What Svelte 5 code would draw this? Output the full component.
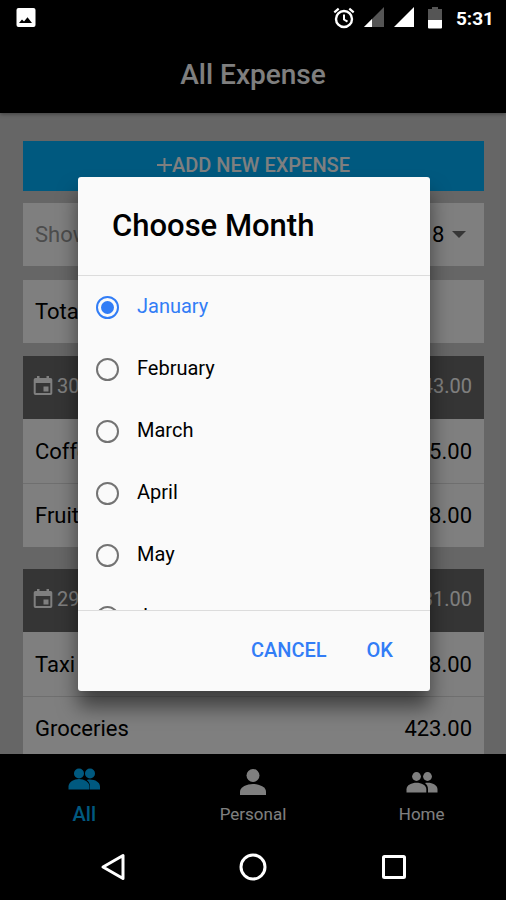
<script>
  const months = [
    "January", "February", "March", "April", "May", "June",
    "July", "August", "September", "October", "November", "December"
  ];

  const days = [
    {
      date: "30 Jan 2018",
      total: "43.00",
      items: [
        { name: "Coffee", amount: "25.00" },
        { name: "Fruits", amount: "18.00" }
      ]
    },
    {
      date: "29 Jan 2018",
      total: "431.00",
      items: [
        { name: "Taxi", amount: "8.00" },
        { name: "Groceries", amount: "423.00" }
      ]
    }
  ];

  const tabs = [
    { id: "all", label: "All" },
    { id: "personal", label: "Personal" },
    { id: "home", label: "Home" }
  ];

  let month = $state("January");
  let year = $state("2018");
  let activeTab = $state("all");
  let dialogOpen = $state(true);

  function closeDialog() {
    dialogOpen = false;
  }
</script>

<div class="device">
  <div class="status-bar">
    <svg class="status-icon" width="20" height="20" viewBox="0 0 20 20">
      <rect x="0.5" y="0" width="19" height="19" rx="2" fill="#fff" />
      <path d="M3 15l3-3.500 2 2 3.500-4.300 4.500 5.800z" fill="#000" />
    </svg>
    <div class="status-right">
      <svg width="22" height="22" viewBox="0 0 22 22" fill="none" stroke="#fff">
        <circle cx="11" cy="12" r="8" stroke-width="2.4" />
        <path d="M11 7.5v5l3.5 2.2" stroke-width="2" />
        <path d="M1.3 5.4l4.4-3.7M20.7 5.4l-4.4-3.7" stroke-width="2.2" />
      </svg>
      <svg width="22" height="22" viewBox="0 0 22 22">
        <path d="M21 0v20H1z" fill="#555" />
        <path d="M9 12v8H1z" fill="#fff" />
      </svg>
      <svg width="22" height="22" viewBox="0 0 22 22">
        <path d="M21 0v20H1z" fill="#fff" />
      </svg>
      <svg class="battery" width="14" height="22" viewBox="0 0 14 22">
        <path d="M4 0h6v2h4v11H0V2h4z" fill="#555" />
        <path d="M0 13h14v7.500a1 1 0 0 1-1 1H1a1 1 0 0 1-1-1z" fill="#fff" />
      </svg>
      <span class="clock">5:31</span>
    </div>
  </div>

  <div class="app">
    <header class="toolbar">
      <h1>All Expense</h1>
    </header>

    <main class="content">
      <button class="add-button">
        <svg width="15" height="16" viewBox="0 0 15 16">
          <path d="M7.500 1v14M0 8h15" stroke="#fff" stroke-width="2" />
        </svg>
        ADD NEW EXPENSE
      </button>

      <div class="card filter">
        <label for="year">Show Month</label>
        <div class="year">
          <select id="year" bind:value={year}>
            <option>2017</option>
            <option>2018</option>
          </select>
          <svg width="14" height="7" viewBox="0 0 14 7">
            <path d="M0 0h14L7 7z" fill="#6c6c6c" />
          </svg>
        </div>
      </div>

      <div class="card total">Total Expense</div>

      {#each days as day}
        <section class="day">
          <div class="day-header">
            <svg width="20" height="20" viewBox="0 0 20 20">
              <path d="M4 0h2.500v2h7V0H16v2h1.500A1.800 1.800 0 0 1 19.300 3.800v13.400a1.800 1.800 0 0 1-1.800 1.800h-15A1.800 1.800 0 0 1 .7 17.200V3.800A1.800 1.800 0 0 1 2.500 2H4zM2.700 7v10h14.600V7zM10.500 10.500h5v5h-5z" fill="#fff" fill-rule="evenodd" />
            </svg>
            <span class="date">{day.date}</span>
            <span>{day.total}</span>
          </div>
          {#each day.items as item}
            <div class="item">
              <span>{item.name}</span>
              <span>{item.amount}</span>
            </div>
          {/each}
        </section>
      {/each}
    </main>

    <nav class="tabs">
      {#each tabs as tab}
        <button class="tab" class:active={activeTab === tab.id} onclick={() => { activeTab = tab.id }}>
          {#if tab.id === "all"}
            <svg width="32" height="28" viewBox="0 0 32 28" fill="currentColor">
              <circle cx="11" cy="6.500" r="5" />
              <circle cx="22" cy="6.500" r="5" />
              <path d="M.5 22.500v-3C.5 15 6 12 11 12s10.500 3 10.500 7.500v3z" />
              <path d="M22 22.500v-3c0-3-1.200-5-3.200-6.600C25 11.500 32 14.500 32 19.500v3z" />
            </svg>
          {:else if tab.id === "personal"}
            <svg width="28" height="28" viewBox="0 0 28 28" fill="currentColor">
              <circle cx="14" cy="8.500" r="6.500" />
              <path d="M1 28v-3.500c0-4.500 7-7.500 13-7.500s13 3 13 7.500V28z" />
            </svg>
          {:else}
            <svg width="32" height="28" viewBox="0 0 32 28" fill="currentColor">
              <circle cx="10.500" cy="9.500" r="4.400" />
              <circle cx="21.500" cy="9.500" r="4.400" />
              <path d="M.5 25.500v-3.200c0-4.200 5.200-6.500 10-6.500s9.800 2.300 9.800 6.500v3.200z" />
              <path d="M22 25.500v-3.200c0-2.800-1.200-4.800-3-6.200 5.500-1.200 12.500 1.400 12.500 6.200v3.200z" />
            </svg>
          {/if}
          <span>{tab.label}</span>
        </button>
      {/each}
    </nav>

    {#if dialogOpen}
      <div class="backdrop">
        <div class="dialog" role="dialog" aria-modal="true" aria-labelledby="dialog-title">
          <h2 id="dialog-title">Choose Month</h2>
          <div class="options">
            {#each months as name}
              <label class="option" class:checked={month === name}>
                <input type="radio" name="month" value={name} bind:group={month} />
                <span>{name}</span>
              </label>
            {/each}
          </div>
          <div class="actions">
            <button onclick={closeDialog}>CANCEL</button>
            <button onclick={closeDialog}>OK</button>
          </div>
        </div>
      </div>
    {/if}
  </div>

  <div class="system-nav">
    <button aria-label="Back">
      <svg width="28" height="28" viewBox="0 0 28 28" fill="none" stroke="#fff" stroke-width="3" stroke-linejoin="round">
        <path d="M25 2.500v23L5 14z" />
      </svg>
    </button>
    <button aria-label="Home screen">
      <svg width="28" height="28" viewBox="0 0 28 28" fill="none" stroke="#fff" stroke-width="3">
        <circle cx="14" cy="14" r="12" />
      </svg>
    </button>
    <button aria-label="Recent apps">
      <svg width="28" height="28" viewBox="0 0 28 28" fill="none" stroke="#fff" stroke-width="3">
        <rect x="3.500" y="3.500" width="21" height="21" rx="1" />
      </svg>
    </button>
  </div>
</div>

<style>
  :global(body) {
    background: #000;
  }

  .device {
    display: flex;
    flex-direction: column;
    height: 100vh;
    background: #000;
    font-family: Roboto, "Noto Sans", sans-serif;
    font-size: 22px;
    color: #000;
  }

  button {
    margin: 0;
    padding: 0;
    border: none;
    background: none;
    font: inherit;
    cursor: pointer;
  }

  svg {
    display: block;
    flex: none;
  }

  .status-bar {
    display: flex;
    justify-content: space-between;
    align-items: center;
    height: 36px;
    padding: 0 12px 0 16px;
    color: #fff;
  }

  .status-right {
    display: flex;
    align-items: center;
    gap: 8px;
  }

  .status-right .battery {
    margin: 0 6px 0 5px;
  }

  .clock {
    font-size: 19px;
    font-weight: 700;
  }

  .app {
    position: relative;
    display: flex;
    flex-direction: column;
    flex: 1;
    min-height: 0;
  }

  .toolbar {
    display: flex;
    justify-content: center;
    align-items: center;
    height: 77px;
    flex: none;
    background: #000;
    color: #fff;
    box-shadow: 0 1px 4px rgba(0, 0, 0, 0.4);
    z-index: 1;
  }

  h1 {
    margin: 0;
    font-size: 28px;
    font-weight: 500;
  }

  .content {
    flex: 1;
    min-height: 0;
    overflow: hidden;
    padding: 28px 22px 0 23px;
    background: #ccc;
  }

  .add-button {
    display: flex;
    justify-content: center;
    align-items: center;
    width: 100%;
    height: 50px;
    margin-bottom: 12px;
    padding-bottom: 2px;
    background: #00b2ff;
    color: #fff;
    font-size: 20px;
    font-weight: 500;
  }

  .card {
    display: flex;
    align-items: center;
    height: 63px;
    margin-bottom: 14px;
    padding: 0 12px;
    background: #fff;
  }

  .total {
    margin-bottom: 13px;
  }

  .filter {
    justify-content: space-between;
    padding-right: 18px;
    color: #999;
  }

  .year {
    display: flex;
    align-items: center;
    gap: 7px;
  }

  select {
    appearance: none;
    padding: 0;
    border: none;
    background: none;
    font: inherit;
    color: #000;
  }

  .day {
    margin-bottom: 22px;
  }

  .day-header {
    display: flex;
    align-items: center;
    height: 63px;
    padding: 0 12px 4px 10px;
    box-sizing: border-box;
    background: #6a6a6a;
    color: #fff;
    font-size: 20px;
  }

  .date {
    flex: 1;
    margin-left: 4px;
  }

  .item {
    display: flex;
    justify-content: space-between;
    align-items: center;
    height: 64px;
    padding: 0 12px;
    background: #fff;
  }

  .item + .item {
    box-shadow: inset 0 1px #dedede;
  }

  .tabs {
    display: grid;
    grid-template-columns: repeat(3, 1fr);
    height: 80px;
    flex: none;
    background: #000;
  }

  .tab {
    display: flex;
    flex-direction: column;
    align-items: center;
    padding-top: 13px;
    color: #fff;
    font-size: 17px;
    line-height: 24px;
  }

  .tab span {
    margin-top: 7px;
  }

  .tab.active {
    color: #00b2ff;
    font-size: 20px;
    font-weight: 500;
  }

  .backdrop {
    position: absolute;
    inset: 0;
    z-index: 2;
    display: flex;
    justify-content: center;
    align-items: center;
    padding: 0 76px 2px 78px;
    background: rgba(0, 0, 0, 0.5);
  }

  .dialog {
    display: flex;
    flex-direction: column;
    width: 100%;
    max-width: 420px;
    background: #fafafa;
    border-radius: 3px;
    box-shadow: 0 16px 20px rgba(0, 0, 0, 0.5);
  }

  h2 {
    margin: 0;
    padding: 29px 34px;
    font-size: 31px;
    font-weight: 500;
    line-height: 40px;
  }

  .options {
    height: 334px;
    overflow-y: auto;
    scrollbar-width: none;
    border-top: 1px solid #dcdcdc;
    border-bottom: 1px solid #dcdcdc;
  }

  .option {
    display: flex;
    align-items: center;
    gap: 18px;
    height: 62px;
    padding-left: 18px;
    font-size: 20px;
    line-height: 24px;
  }

  .option span {
    padding-bottom: 2px;
  }

  .option.checked {
    color: #327df6;
  }

  .option input {
    appearance: none;
    display: grid;
    place-content: center;
    width: 23px;
    height: 23px;
    margin: 0;
    border: 2px solid #737373;
    border-radius: 50%;
  }

  .option input:checked {
    border-color: #327df6;
  }

  .option input:checked::before {
    content: "";
    width: 13px;
    height: 13px;
    border-radius: 50%;
    background: #327df6;
  }

  .actions {
    display: flex;
    justify-content: flex-end;
    gap: 40px;
    height: 80px;
    padding: 0 37px 2px 0;
    box-sizing: border-box;
    color: #327df6;
  }

  .actions button {
    color: inherit;
    font-size: 20px;
    font-weight: 500;
  }

  .system-nav {
    display: flex;
    justify-content: center;
    align-items: center;
    gap: 113px;
    height: 66px;
    flex: none;
    background: #000;
  }
</style>
